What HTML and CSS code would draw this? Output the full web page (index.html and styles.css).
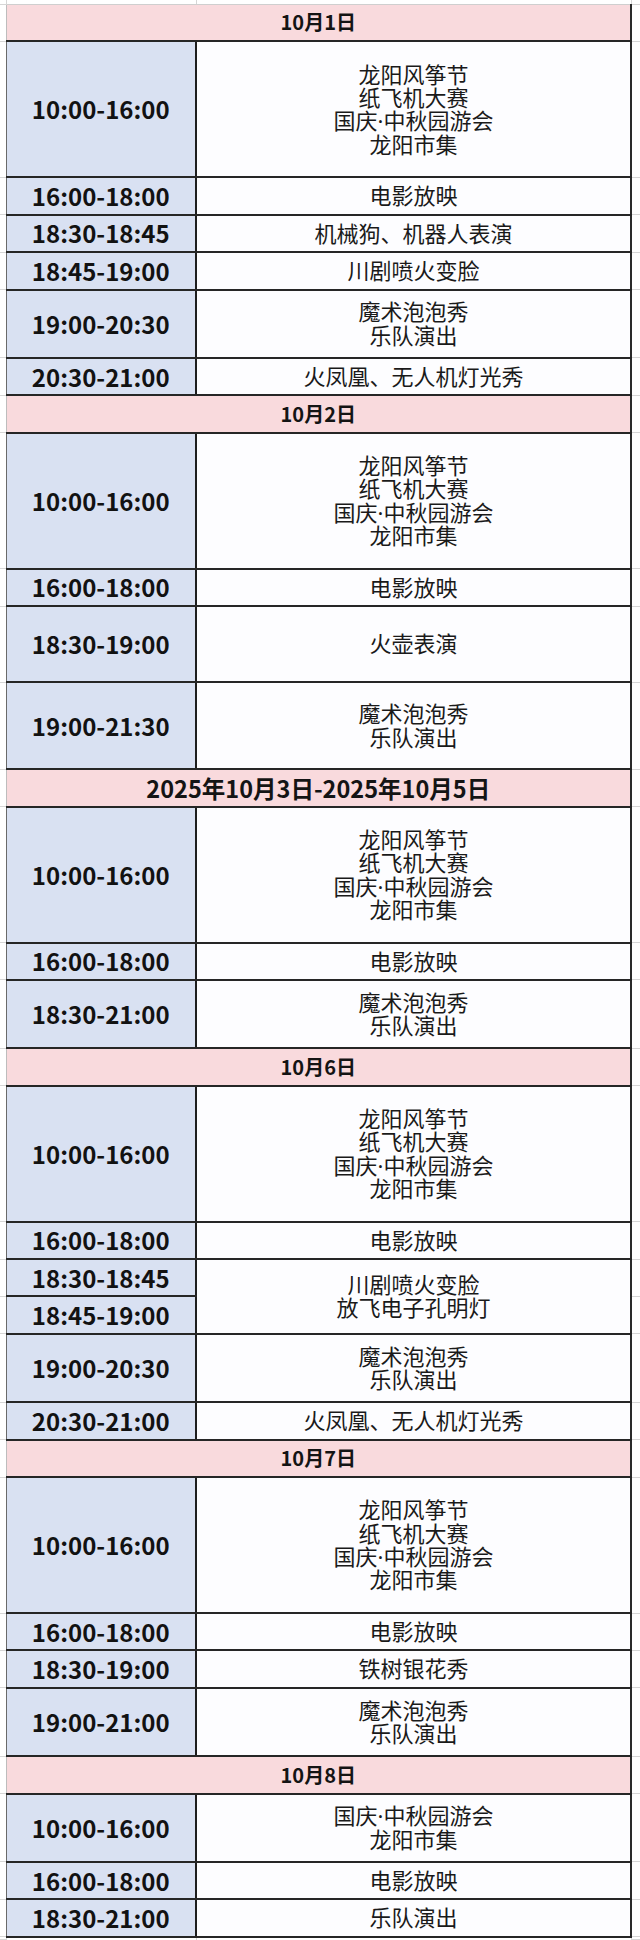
FILE: index.html
```html
<!DOCTYPE html>
<html lang="zh-CN">
<head>
<meta charset="utf-8">
<title>国庆中秋活动安排</title>
<link rel="stylesheet" href="styles.css">
</head>
<body>
<table class="sched">
  <colgroup>
    <col class="c-edge">
    <col class="c-time">
    <col class="c-act">
    <col class="c-edge-r">
  </colgroup>
  <tr class="top"><td class="edge"></td><td class="gap"></td><td class="gap"></td><td class="edge"></td></tr>

  <tr class="u first"><td class="edge"></td><th class="day" colspan="2">10月1日</th><td class="edge"></td></tr>
  <tr class="f"><td class="edge"></td><td class="time">10:00-16:00</td><td class="act"><span class="ln">龙阳风筝节</span><span class="ln">纸飞机大赛</span><span class="ln">国庆·中秋园游会</span><span class="ln">龙阳市集</span></td><td class="edge"></td></tr>
  <tr class="u"><td class="edge"></td><td class="time">16:00-18:00</td><td class="act"><span class="ln">电影放映</span></td><td class="edge"></td></tr>
  <tr class="u"><td class="edge"></td><td class="time">18:30-18:45</td><td class="act"><span class="ln">机械狗、机器人表演</span></td><td class="edge"></td></tr>
  <tr class="u"><td class="edge"></td><td class="time">18:45-19:00</td><td class="act"><span class="ln">川剧喷火变脸</span></td><td class="edge"></td></tr>
  <tr class="t"><td class="edge"></td><td class="time">19:00-20:30</td><td class="act"><span class="ln">魔术泡泡秀</span><span class="ln">乐队演出</span></td><td class="edge"></td></tr>
  <tr class="u"><td class="edge"></td><td class="time">20:30-21:00</td><td class="act"><span class="ln">火凤凰、无人机灯光秀</span></td><td class="edge"></td></tr>

  <tr class="u"><td class="edge"></td><th class="day" colspan="2">10月2日</th><td class="edge"></td></tr>
  <tr class="f"><td class="edge"></td><td class="time">10:00-16:00</td><td class="act"><span class="ln">龙阳风筝节</span><span class="ln">纸飞机大赛</span><span class="ln">国庆·中秋园游会</span><span class="ln">龙阳市集</span></td><td class="edge"></td></tr>
  <tr class="u"><td class="edge"></td><td class="time">16:00-18:00</td><td class="act"><span class="ln">电影放映</span></td><td class="edge"></td></tr>
  <tr class="xa"><td class="edge"></td><td class="time">18:30-19:00</td><td class="act"><span class="ln">火壶表演</span></td><td class="edge"></td></tr>
  <tr class="xb"><td class="edge"></td><td class="time">19:00-21:30</td><td class="act"><span class="ln">魔术泡泡秀</span><span class="ln">乐队演出</span></td><td class="edge"></td></tr>

  <tr class="u"><td class="edge"></td><th class="day day-long" colspan="2">2025年10月3日-2025年10月5日</th><td class="edge"></td></tr>
  <tr class="f"><td class="edge"></td><td class="time">10:00-16:00</td><td class="act"><span class="ln">龙阳风筝节</span><span class="ln">纸飞机大赛</span><span class="ln">国庆·中秋园游会</span><span class="ln">龙阳市集</span></td><td class="edge"></td></tr>
  <tr class="u"><td class="edge"></td><td class="time">16:00-18:00</td><td class="act"><span class="ln">电影放映</span></td><td class="edge"></td></tr>
  <tr class="t"><td class="edge"></td><td class="time">18:30-21:00</td><td class="act"><span class="ln">魔术泡泡秀</span><span class="ln">乐队演出</span></td><td class="edge"></td></tr>

  <tr class="u"><td class="edge"></td><th class="day" colspan="2">10月6日</th><td class="edge"></td></tr>
  <tr class="f"><td class="edge"></td><td class="time">10:00-16:00</td><td class="act"><span class="ln">龙阳风筝节</span><span class="ln">纸飞机大赛</span><span class="ln">国庆·中秋园游会</span><span class="ln">龙阳市集</span></td><td class="edge"></td></tr>
  <tr class="u"><td class="edge"></td><td class="time">16:00-18:00</td><td class="act"><span class="ln">电影放映</span></td><td class="edge"></td></tr>
  <tr class="u"><td class="edge"></td><td class="time">18:30-18:45</td><td class="act" rowspan="2"><span class="ln">川剧喷火变脸</span><span class="ln">放飞电子孔明灯</span></td><td class="edge"></td></tr>
  <tr class="u"><td class="edge"></td><td class="time">18:45-19:00</td><td class="edge"></td></tr>
  <tr class="t"><td class="edge"></td><td class="time">19:00-20:30</td><td class="act"><span class="ln">魔术泡泡秀</span><span class="ln">乐队演出</span></td><td class="edge"></td></tr>
  <tr class="u"><td class="edge"></td><td class="time">20:30-21:00</td><td class="act"><span class="ln">火凤凰、无人机灯光秀</span></td><td class="edge"></td></tr>

  <tr class="u"><td class="edge"></td><th class="day" colspan="2">10月7日</th><td class="edge"></td></tr>
  <tr class="f"><td class="edge"></td><td class="time">10:00-16:00</td><td class="act"><span class="ln">龙阳风筝节</span><span class="ln">纸飞机大赛</span><span class="ln">国庆·中秋园游会</span><span class="ln">龙阳市集</span></td><td class="edge"></td></tr>
  <tr class="u"><td class="edge"></td><td class="time">16:00-18:00</td><td class="act"><span class="ln">电影放映</span></td><td class="edge"></td></tr>
  <tr class="u"><td class="edge"></td><td class="time">18:30-19:00</td><td class="act"><span class="ln">铁树银花秀</span></td><td class="edge"></td></tr>
  <tr class="t"><td class="edge"></td><td class="time">19:00-21:00</td><td class="act"><span class="ln">魔术泡泡秀</span><span class="ln">乐队演出</span></td><td class="edge"></td></tr>

  <tr class="u"><td class="edge"></td><th class="day" colspan="2">10月8日</th><td class="edge"></td></tr>
  <tr class="t"><td class="edge"></td><td class="time">10:00-16:00</td><td class="act"><span class="ln">国庆·中秋园游会</span><span class="ln">龙阳市集</span></td><td class="edge"></td></tr>
  <tr class="u"><td class="edge"></td><td class="time">16:00-18:00</td><td class="act"><span class="ln">电影放映</span></td><td class="edge"></td></tr>
  <tr class="u"><td class="edge"></td><td class="time">18:30-21:00</td><td class="act"><span class="ln">乐队演出</span></td><td class="edge"></td></tr>

  <tr class="tail"><td class="edge"></td><td class="gap"></td><td class="gap"></td><td class="edge"></td></tr>
</table>
</body>
</html>
```

FILE: styles.css
```css
html, body {
  margin: 0;
  padding: 0;
  background: #ffffff;
}

body {
  font-family: "Noto Sans CJK SC", "Noto Sans", sans-serif;
  color: #161616;
  width: 640px;
  height: 1940px;
  overflow: hidden;
}

.sched {
  width: 640px;
  border-collapse: collapse;
  table-layout: fixed;
}

.c-edge { width: 6px; }
.c-time { width: 190px; }
.c-act { width: 435px; }
.c-edge-r { width: 9px; }

.sched td,
.sched th {
  padding: 0;
  text-align: center;
  vertical-align: middle;
}

/* row heights */
.top { height: 4px; }
.tail { height: 3px; }
.u { height: 37.4px; }
.t { height: 68.4px; }
.f { height: 136px; }
.xa { height: 76px; }
.xb { height: 87px; }

/* spreadsheet gridlines outside the table */
.edge {
  border-bottom: 1px solid #d6d6d6;
}
.gap {
  border-left: 1px solid #d6d6d6;
  border-right: 1px solid #d6d6d6;
  border-bottom: 1px solid #cfcfcf;
}
.tail .gap {
  border-bottom: none;
}

.day {
  background: #f9dadd;
  font-weight: 700;
  font-size: 20px;
  line-height: 24px;
  color: #141414;
  border-top: 2px solid #262626;
  border-bottom: 2px solid #262626;
  border-left: 1px solid #bdbdbd;
  border-right: 2px solid #2a2a2a;
}
.first .day {
  border-top: 1px solid #c8c8c8;
}
.day-long {
  font-size: 23.5px;
}

.time {
  background: #d9e1f2;
  font-weight: 700;
  font-size: 24px;
  line-height: 28px;
  color: #121212;
  border-top: 2px solid #262626;
  border-bottom: 2px solid #262626;
  border-left: 1px solid #6a6a6a;
  border-right: 2px solid #1e1e1e;
}

.act {
  background: #fdfdff;
  font-family: "Noto Sans", "Noto Sans CJK SC", sans-serif;
  font-size: 22px;
  color: #1a1a1a;
  border-top: 2px solid #262626;
  border-bottom: 2px solid #262626;
  border-right: 2px solid #2a2a2a;
}

.ln {
  display: block;
  height: 23.4px;
  line-height: 23.4px;
  white-space: nowrap;
}
```
